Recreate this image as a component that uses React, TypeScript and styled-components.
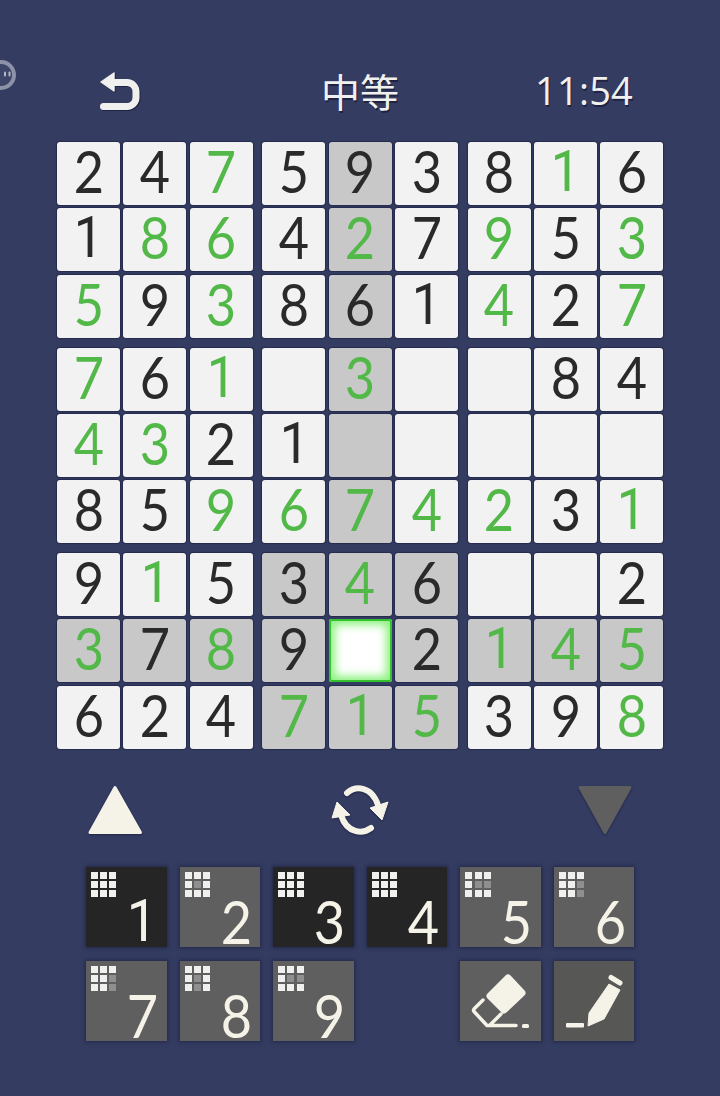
import React from "react";
import styled, { createGlobalStyle } from "styled-components";

const board = [
  "2b 4b 7g 5b 9b 3b 8b 1g 6b",
  "1b 8g 6g 4b 2g 7b 9g 5b 3g",
  "5g 9b 3g 8b 6b 1b 4g 2b 7g",
  "7g 6b 1g -- 3g -- -- 8b 4b",
  "4g 3g 2b 1b -- -- -- -- --",
  "8b 5b 9g 6g 7g 4g 2g 3b 1g",
  "9b 1g 5b 3b 4g 6b -- -- 2b",
  "3g 7b 8g 9b -- 2b 1g 4g 5g",
  "6b 2b 4b 7g 1g 5g 3b 9b 8g",
].map((row) => row.split(" "));

const SELECTED_ROW = 7;
const SELECTED_COL = 4;

const isShaded = (r: number, c: number) =>
  r === SELECTED_ROW ||
  c === SELECTED_COL ||
  (Math.floor(r / 3) === Math.floor(SELECTED_ROW / 3) &&
    Math.floor(c / 3) === Math.floor(SELECTED_COL / 3));

const tiles = [
  { n: 1, dark: true, dim: [] as number[] },
  { n: 2, dark: false, dim: [4] },
  { n: 3, dark: true, dim: [] },
  { n: 4, dark: true, dim: [] },
  { n: 5, dark: false, dim: [4, 5] },
  { n: 6, dark: false, dim: [5, 8] },
  { n: 7, dark: false, dim: [5, 8] },
  { n: 8, dark: false, dim: [4, 7] },
  { n: 9, dark: false, dim: [4, 5] },
];

export default function App() {
  return (
    <>
      <GlobalStyle />
      <Page>
        <FloatBall>
          <svg width="17" height="32" viewBox="0 0 17 32">
            <circle cx="1" cy="16" r="15" fill="#8e92a8" />
            <circle cx="1" cy="16" r="11" fill="#3d4568" />
            <rect x="4" y="12.500" width="2" height="5" rx="1" fill="#b4b7c6" />
            <rect x="8.500" y="12.500" width="2" height="5" rx="1" fill="#b4b7c6" />
          </svg>
        </FloatBall>

        <Header>
          <BackButton>
            <svg width="44" height="42" viewBox="0 0 44 42">
              <path d="M2 11 15 2v18z" fill="#f0f0ee" stroke="#f0f0ee" strokeWidth="1.500" strokeLinejoin="round" />
              <path
                d="M14 11.500H28a9 9 0 0 1 9 9v6a9 9 0 0 1-9 9H4.500"
                fill="none"
                stroke="#f0f0ee"
                strokeWidth="7"
                strokeLinecap="round"
              />
            </svg>
          </BackButton>
          <Title>中等</Title>
          <Clock>11:54</Clock>
        </Header>

        <Board>
          {[0, 1, 2].map((br) =>
            [0, 1, 2].map((bc) => (
              <Block key={`${br}-${bc}`}>
                {[0, 1, 2].map((r) =>
                  [0, 1, 2].map((c) => {
                    const row = br * 3 + r;
                    const col = bc * 3 + c;
                    const value = board[row][col];
                    const selected = row === SELECTED_ROW && col === SELECTED_COL;
                    return (
                      <Cell
                        key={c}
                        $shaded={isShaded(row, col)}
                        $selected={selected}
                        $green={value[1] === "g"}
                      >
                        {value[0] !== "-" && <Digit $plain={value[0] === "1"}>{value[0]}</Digit>}
                      </Cell>
                    );
                  })
                )}
              </Block>
            ))
          )}
        </Board>

        <Controls>
          <svg width="56" height="62" viewBox="0 0 56 62">
            <path d="M28 7.500 53.500 52.500H3z" fill="#f5f2e8" stroke="#f5f2e8" strokeWidth="3" strokeLinejoin="round" />
          </svg>
          <svg width="70" height="62" viewBox="0 0 70 62">
            <g fill="none" stroke="#f5f2e8" strokeWidth="6" strokeLinecap="round">
              <path d="M22 13C30 6 46 5 53 25" />
              <path d="M46 48C38 54 22 54 16 35" />
            </g>
            <path d="M63 22 57 40 45 28z" fill="#f5f2e8" stroke="#f5f2e8" strokeWidth="1" strokeLinejoin="round" />
            <path d="M12 22 25 35 7 38z" fill="#f5f2e8" stroke="#f5f2e8" strokeWidth="1" strokeLinejoin="round" />
          </svg>
          <svg width="56" height="62" viewBox="0 0 56 62">
            <path d="M3 7.500H53L28 52.500z" fill="#5f5f5f" stroke="#5f5f5f" strokeWidth="3" strokeLinejoin="round" />
          </svg>
        </Controls>

        <Pad>
          {tiles.slice(0, 6).map((t) => (
            <NumberTile key={t.n} {...t} />
          ))}
          {tiles.slice(6).map((t) => (
            <NumberTile key={t.n} {...t} />
          ))}
          <span />
          <Tile>
            <svg width="81" height="81" viewBox="0 0 81 81">
              <path d="M48 17 62 32 44 49 30 35z" fill="#f5f2e8" stroke="#f5f2e8" strokeWidth="7" strokeLinejoin="round" />
              <path d="M23 39 14 48a2 2 0 0 0 0 2.500L27 64.500H56M41 53 30 64" fill="none" stroke="#f5f2e8" strokeWidth="3.500" strokeLinejoin="round" strokeLinecap="round" />
              <rect x="62" y="63" width="7" height="4" rx="1.500" fill="#f5f2e8" />
            </svg>
          </Tile>
          <Tile $tone="#575755">
            <svg width="81" height="81" viewBox="0 0 81 81">
              <path d="M55 23 66 29 50 58 34 65 35 52z" fill="#f5f2e8" stroke="#f5f2e8" strokeLinejoin="round" />
              <path d="M57 16.500 66 22" stroke="#f5f2e8" strokeWidth="5" strokeLinecap="round" />
              <rect x="12" y="62" width="18" height="4.500" rx="1" fill="#f5f2e8" />
            </svg>
          </Tile>
        </Pad>
      </Page>
    </>
  );
}

const NumberTile = ({ n, dark, dim }: { n: number; dark: boolean; dim: number[] }) => (
  <Tile $tone={dark ? "#252525" : undefined}>
    <MiniGrid>
      {Array.from({ length: 9 }, (_, i) => (
        <MiniDot key={i} $dim={dim.includes(i)} />
      ))}
    </MiniGrid>
    <TileNumber>
      <Digit $plain={n === 1}>{n}</Digit>
    </TileNumber>
  </Tile>
);

const GlobalStyle = createGlobalStyle`
  html, body {
    margin: 0;
    background: #343c62;
  }
`;

const Page = styled.div`
  position: relative;
  width: 720px;
  height: 1096px;
  overflow: hidden;
  background: #343c62;
  font-family: "Lato", "Noto Sans CJK SC", sans-serif;
`;

const FloatBall = styled.div`
  position: absolute;
  left: 0;
  top: 59px;
  line-height: 0;
  filter: blur(0.6px);
`;

const Header = styled.div`
  height: 142px;
  box-sizing: border-box;
  padding: 71px 87px 0 87px;
  display: grid;
  grid-template-columns: 1fr auto 1fr;
  align-items: start;
`;

const BackButton = styled.div`
  line-height: 0;
  margin-left: 12px;
  filter: drop-shadow(1px 1px 0 rgba(20, 24, 50, 0.7));
`;

const Title = styled.div`
  color: #f0f0ee;
  font-size: 39px;
  line-height: 38px;
  font-family: "Noto Sans CJK SC", sans-serif;
  text-shadow: 1px 2px 0 rgba(20, 24, 50, 0.7);
`;

const Clock = styled.div`
  justify-self: end;
  color: #f0f0ee;
  font-family: "Open Sans", sans-serif;
  font-size: 38px;
  line-height: 38px;
  letter-spacing: 0.2px;
  text-shadow: 1px 2px 0 rgba(20, 24, 50, 0.7);
`;

const Board = styled.div`
  margin: 0 57px;
  display: grid;
  grid-template-columns: repeat(3, 195.67px);
  grid-auto-rows: 195.67px;
  column-gap: 9.67px;
  row-gap: 9.9px;
`;

const Block = styled.div`
  display: grid;
  grid-template-columns: repeat(3, 63px);
  grid-auto-rows: 63px;
  gap: 3.33px;
`;

const Cell = styled.div<{ $shaded?: boolean; $selected?: boolean; $green?: boolean }>`
  display: flex;
  align-items: center;
  justify-content: center;
  border-radius: 3px;
  background: ${({ $shaded, $selected }) =>
    $selected ? "#ffffff" : $shaded ? "#c8c8c8" : "#f2f2f2"};
  color: ${({ $green }) => ($green ? "#52b848" : "#2a2a2a")};
  font-size: 58px;
  line-height: 1;
  padding-bottom: 5px;
  box-sizing: border-box;
  box-shadow: ${({ $selected }) =>
    $selected
      ? "inset 0 0 0 2px #35c030, inset 0 0 9px 6px #8df27f"
      : "0 0 1px 1px rgba(20, 24, 50, 0.45)"};
`;

const Digit = styled.span<{ $plain?: boolean }>`
  display: inline-block;
  font-family: ${({ $plain }) => ($plain ? '"Roboto"' : '"Lato"')}, sans-serif;
  font-weight: 400;
  transform: scaleX(0.9);
`;

const Controls = styled.div`
  margin: 31px 87px 0;
  height: 62px;
  display: flex;
  justify-content: space-between;
  align-items: flex-start;
  filter: drop-shadow(0 1px 1px rgba(20, 24, 50, 0.6));
`;

const Pad = styled.div`
  margin: 25px 0 0 86px;
  display: grid;
  grid-template-columns: repeat(6, 80.500px);
  grid-auto-rows: 80.500px;
  column-gap: 13.100px;
  row-gap: 13.500px;
`;

const Tile = styled.div<{ $tone?: string }>`
  position: relative;
  background: ${({ $tone }) => $tone ?? "#5f5f5f"};
  line-height: 0;
  box-shadow: 0 0 4px 1px rgba(20, 24, 50, 0.55);
`;

const MiniGrid = styled.div`
  position: absolute;
  left: 5px;
  top: 5px;
  display: grid;
  grid-template-columns: repeat(3, 7px);
  grid-auto-rows: 7px;
  gap: 2.200px;
`;

const MiniDot = styled.div<{ $dim?: boolean }>`
  background: ${({ $dim }) => ($dim ? "#8f8f8f" : "#f0f0ee")};
`;

const TileNumber = styled.div`
  position: absolute;
  left: 39px;
  bottom: -3px;
  width: 32px;
  text-align: center;
  color: #f5f2e8;
  font-size: 60px;
  line-height: 58px;
`;
